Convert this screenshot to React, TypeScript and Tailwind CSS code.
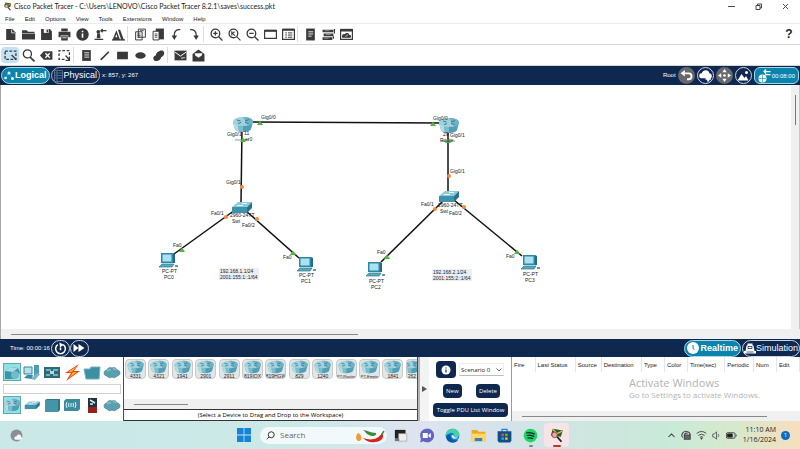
import React from "react";
import clsx from "clsx";

type Kids = { children?: React.ReactNode };

const Glyph = ({ children, size = 13 }: Kids & { size?: number }) => (
  <svg viewBox="0 0 24 24" width={size} height={size} fill="none" stroke="#3a3a3a" strokeWidth="2.4" aria-hidden="true">
    {children}
  </svg>
);

const D = "#3a3a3a";

const topGroups: { name: string; art: React.ReactNode }[][] = [
  [
    { name: "New", art: <><path d="M4 2h11l6 6v14H4z" fill={D} stroke="none" /><path d="M14 3v6h6" stroke="#fff" strokeWidth="1.4" /></> },
    { name: "Open", art: <path d="M0 4h9l2 3h12v2H0zM0 10h24v11H0z" fill={D} stroke="none" /> },
    { name: "Save", art: <><path d="M2 2h16l4 4v16H2z" fill={D} stroke="none" /><path d="M7 2h9v7H7z" fill="#fff" stroke="none" /><path d="M12 3h3v5h-3z" fill={D} stroke="none" /></> },
    { name: "Print", art: <><path d="M6 1h12v5H6zM1 7h22v10h-4v-3H5v3H1zM6 15h12v8H6z" fill={D} stroke="none" /><path d="M8 18h8" stroke="#fff" strokeWidth="1.5" /></> },
    { name: "Info", art: <><circle cx="12" cy="12" r="11.5" fill={D} stroke="none" /><path d="M12 10v8M12 5v3" stroke="#fff" strokeWidth="3" /></> },
    { name: "Activity", art: <><circle cx="8" cy="7" r="3.500" fill={D} stroke="none" /><path d="M6 10h5l1 9H5z" fill={D} stroke="none" /><path d="M1 21h16M12 5h11M16 2l-3 3 3 3" /></> },
    { name: "Draw", art: <><path d="M1 22 8 4l7 18zM11 3h4l7 19h-5z" fill={D} stroke="none" /><path d="m6 17 2-6 2 6z" fill="#fff" stroke="none" /><path d="M0 22h24" /></> },
  ],
  [
    { name: "Copy", art: <><path d="M8 2h13v15H8zM3 7h12v15H3z" fill="#fff" strokeWidth="1.8" /><path d="M6 11h6M6 14h6M6 17h6M11 5h7" strokeWidth="1.6" /></> },
    { name: "Paste", art: <><path d="M7 1h15v20H7z" fill={D} stroke="none" /><path d="M2 6h11v16H2z" fill="#fff" strokeWidth="1.8" /><path d="M5 11h5M5 14h5M5 17h5" strokeWidth="1.6" /></> },
    { name: "Undo", art: <><path d="M19 3c-7-1-11 3-11 9v4" /><path d="M3 14h10l-5 8z" fill={D} stroke="none" /></> },
    { name: "Redo", art: <><path d="M4 3c7-1 11 3 11 9v4" /><path d="M10 14h10l-5 8z" fill={D} stroke="none" /></> },
  ],
  [
    { name: "Zoom in", art: <><circle cx="10" cy="10" r="8" /><path d="m16 16 7 7M6 10h8M10 6v8" /></> },
    { name: "Zoom reset", art: <><circle cx="10" cy="10" r="8" /><path d="m16 16 7 7M7 6v8M7 11l5-4M8 10l5 4" strokeWidth="2" /></> },
    { name: "Zoom out", art: <><circle cx="10" cy="10" r="8" /><path d="m16 16 7 7M6 10h8" /></> },
    { name: "Viewport", art: <><path d="M1 5h22v14H1z" /><path d="M1 5h22" strokeWidth="4" /></> },
    { name: "List", art: <><path d="M1 3h22v18H1z" /><path d="M1 3h22" strokeWidth="4" /><path d="M6 9h3M6 13h3M6 17h3M11 9h8M11 13h8M11 17h8" strokeWidth="1.8" /></> },
  ],
  [
    { name: "Notes", art: <><path d="M4 1h16v22H4z" fill={D} stroke="none" /><path d="M8 7h9M8 11h9M8 15h6" stroke="#fff" strokeWidth="1.6" /></> },
    { name: "Devices", art: <><path d="M1 3h20v5H1zM3 10h18v5H3zM1 17h18v5H1z" fill={D} stroke="none" /><path d="M23 2v8M21 15v5" /><path d="M5 5h9M7 12h9M4 19h8" stroke="#ccc" strokeWidth="1" /></> },
    { name: "Cluster", art: <><path d="M1 3h22v18H1z" /><path d="M1 4h22" strokeWidth="5" /><path d="M5 17c-1-5 3-5 4-4 2-4 7-3 7 0 4 0 4 4 2 4z" fill={D} /><path d="m10 16 5-4" stroke="#fff" strokeWidth="1.3" /></> },
  ],
];

const drawGroups: { name: string; art: React.ReactNode; on?: boolean }[][] = [
  [
    { name: "Select", on: true, art: <><path d="M2 4h20v15H2z" strokeDasharray="5 3" /><path d="m14 11 8 8" /></> },
    { name: "Inspect", art: <><circle cx="10" cy="9" r="7.5" /><path d="m15 15 8 8" strokeWidth="3" /></> },
    { name: "Delete", art: <><path d="m0 12 7-8h16v16H7z" fill={D} stroke="none" /><path d="m10 8 8 8m0-8-8 8" stroke="#fff" strokeWidth="2.4" /></> },
    { name: "Resize", art: <><path d="M21 11V3H2v16h10" strokeDasharray="5 3" /><path d="M14 12l7 8m0-6v7h-7" /></> },
  ],
  [
    { name: "Place note", art: <><path d="M4 2h16v20H4z" fill={D} stroke="none" /><path d="M8 7h9M8 11h9M8 15h9" stroke="#fff" strokeWidth="1.6" /></> },
    { name: "Line", art: <path d="M5 20 20 5" strokeWidth="3" /> },
    { name: "Rectangle", art: <path d="M2 5h20v14H2z" fill={D} stroke="none" /> },
    { name: "Ellipse", art: <ellipse cx="12" cy="12" rx="9.5" ry="6" fill={D} stroke="none" /> },
    { name: "Freeform", art: <path d="M4 21c-4-4 0-9 3-9 0-6 8-11 13-9 5 3 2 10-3 12-1 6-8 9-13 6z" fill={D} stroke="none" /> },
  ],
  [
    { name: "Simple PDU", art: <><path d="M1 3h22v18H1z" fill={D} stroke="none" /><path d="m2 6 10 7 10-7" stroke="#fff" strokeWidth="1.8" /><path d="m13 17 7-1" stroke="#fff" strokeWidth="1.5" /></> },
    { name: "Complex PDU", art: <><path d="M1 9 12 1l11 8v14H1z" fill={D} stroke="none" /><path d="M5 8h14l-1 4-6 4-6-4z" fill="#fff" stroke="none" /></> },
  ],
];

function ToolRow({ groups, children }: Kids & { groups: { name: string; art: React.ReactNode; on?: boolean }[][] }) {
  return (
    <div role="toolbar" className="flex items-center border-b border-[#d6d6d6] py-[2px] pl-px">
      {groups.map((g, i) => (
        <div key={i} className="flex items-center">
          {i > 0 && <span className="mr-[3px] h-4 w-px bg-[#dcdcdc]" />}
          {g.map((t) => (
            <button key={t.name} aria-label={t.name} className={clsx("flex h-4 w-[18px] items-center justify-center rounded-sm", t.on && "bg-[#c4e2f6]")}>
              <Glyph>{t.art}</Glyph>
            </button>
          ))}
        </div>
      ))}
      {children}
    </div>
  );
}

const RouterArt = () => (
  <>
    <path d="M1 6 3 13c1 4 15 4 16 0l2-7z" fill="#4f9fb6" />
    <path d="M1 6l2 7c1 2 3 2.500 4 2.800L6 8z" fill="#b5dbe3" />
    <path d="M6 8l1 7.800 4 .3V9z" fill="#7dbccb" />
    <ellipse cx="11" cy="5.500" rx="10" ry="4.500" fill="#9fd0dc" />
    <path d="M11 1c7 0 10 2 10 4.500S19 9 16 9.500z" fill="#6db3c6" />
    <path d="m5 4 3.500 1M13 5l4-1.500M6 7.500 9 6.500M13 6.500l3.500 1" stroke="#337f97" strokeWidth="1" />
  </>
);
const SwitchArt = () => (
  <>
    <path d="m1 7 6-5h14l-5 5z" fill="#8ccbdc" />
    <path d="M1 7h15v6H1z" fill="#3e92ab" />
    <path d="m16 7 5-5v6l-5 5z" fill="#2a7189" />
    <path d="m6 5.500 6 0m-1-2 5 0" stroke="#e9fbff" />
  </>
);
const PcArt = () => (
  <>
    <path d="M3 1h12v10H3z" fill="#2f87a3" />
    <path d="M4.500 2.500h9v7h-9z" fill="#a9e3f2" />
    <path d="m15 1 2 1v9l-2 0z" fill="#256b84" />
    <path d="M1 15l3-3h12l-2 3z" fill="#58a9c0" stroke="#2c7990" strokeWidth=".7" />
    <path d="M17 14h3" stroke="#2c7990" strokeWidth="1.500" />
  </>
);

const links = [
  [253, 37, 440, 38], [242, 43, 241, 118], [235, 125, 174, 169], [246, 126, 299, 173],
  [448, 45, 448, 107], [444, 115, 381, 177], [454, 115, 522, 171],
];
const ups = [[260, 38], [433, 39], [243, 55], [448, 56], [182, 165], [293, 168], [387, 172], [517, 167]];
const waits = [[242, 102], [449, 91], [226, 132], [257, 134], [435, 124], [464, 122]];

const labels: [number, number, string][] = [
  [261, 32, "Gig0/0"], [227, 49, "Gig0/1"], [244, 48, "11"], [245, 54, "er0"], [226, 97, "Gig0/1"],
  [211, 128, "Fa0/1"], [230, 130, "2960-24TT"], [232, 136, "Swi"], [242, 140, "Fa0/2"],
  [173, 160, "Fa0"], [283, 172, "Fa0"], [162, 186, "PC-PT"], [164, 192, "PC0"], [299, 190, "PC-PT"], [301, 196, "PC1"],
  [433, 33, "Gig0/0"], [443, 49, "29"], [440, 55, "Route"], [450, 50, "Gig0/1"], [450, 86, "Gig0/1"],
  [421, 119, "Fa0/1"], [438, 120, "2960-24TT"], [440, 126, "Swi"], [449, 128, "Fa0/2"],
  [377, 167, "Fa0"], [506, 171, "Fa0"], [369, 196, "PC-PT"], [371, 202, "PC2"], [523, 189, "PC-PT"], [525, 195, "PC3"],
];
const notes: [number, number, string, string][] = [
  [219, 183, "192.168.1.1/24", "2001:155:1::1/64"],
  [432, 184, "192.168.2.1/24", "2001:155:2::1/64"],
];

function Workspace() {
  return (
    <main className="flex min-h-0 flex-1 flex-col border-l border-[#a8a8a8] bg-[#f0f0f0]">
      <div className="flex min-h-0 flex-1">
        <div className="relative -ml-px flex-1 overflow-hidden bg-white bg-clip-content pl-px text-[5px] leading-[6px] text-[#222]">
          <svg className="absolute top-0 left-0" width="600" height="240" fill="none" aria-label="Network topology">
            {links.map(([a, b, c, d], i) => <path key={i} d={`M${a} ${b}L${c} ${d}`} stroke="#111" strokeWidth="1.500" />)}
            <path d="M235 55h14M441 56h14" stroke="#4b7b4b" strokeWidth=".7" />
            <g transform="translate(232 31)"><RouterArt /></g>
            <g transform="translate(438 32)"><RouterArt /></g>
            <g transform="translate(231 115)"><SwitchArt /></g>
            <g transform="translate(438 104)"><SwitchArt /></g>
            <g transform="translate(158 167)"><PcArt /></g>
            <g transform="translate(296 171)"><PcArt /></g>
            <g transform="translate(365 176)"><PcArt /></g>
            <g transform="translate(520 169)"><PcArt /></g>
            {ups.map(([x, y], i) => <path key={i} d={`M${x} ${y - 2.5}l3 4.500h-6z`} fill="#4fb83c" />)}
            {waits.map(([x, y], i) => <circle key={i} cx={x} cy={y} r="2" fill="#f58a3c" />)}
          </svg>
          {notes.map(([x, y, a, b]) => (
            <div key={x} className="absolute bg-[#eceef6] px-px" style={{ left: x, top: y }}>
              {a}<br />{b}
            </div>
          ))}
          {labels.map(([x, y, t], i) => (
            <span key={i} className="absolute -translate-y-1/2 whitespace-nowrap" style={{ left: x, top: y }}>{t}</span>
          ))}
        </div>
        <div className="flex w-[9px] justify-center border-r border-[#c8c8c8] pt-[10px]">
          <span className="h-[30px] w-px bg-[#777]" />
        </div>
      </div>
      <div className="flex h-[10px] items-center pl-[10px]"><span className="h-px w-[44%] bg-[#888]" /></div>
    </main>
  );
}

const roundBtn = "flex h-[17px] w-[17px] items-center justify-center rounded-full";
const pill = "flex h-[17px] items-center border leading-none text-white";

function NavBar() {
  return (
    <nav className="flex shrink-0 items-center bg-[#0e2850] py-px text-[6px] text-white">
      <button className={clsx(pill, "ml-px gap-px rounded-full border-[#a8d8e8] bg-[#0b84ad] px-[2px] text-[9px] font-bold")}>
        <svg width="10" height="12" viewBox="0 0 10 12" fill="#fff" aria-hidden="true"><circle cx="1.500" cy="8" r="1.300" /><circle cx="5" cy="3" r="1.500" /><circle cx="8.500" cy="8.500" r="1.500" /><path d="m1.500 8 3.500-5 3.500 5.500" stroke="#fff" strokeWidth=".4" strokeDasharray="1 1" fill="none" /></svg>
        Logical
      </button>
      <button className={clsx(pill, "ml-px gap-px rounded-full border-[#a9b5c8] px-[2px] text-[9px]")}>
        <svg width="9" height="12" viewBox="0 0 9 12" fill="none" stroke="#53698c" aria-hidden="true"><path d="M.5.500h8v11h-8zM1 3h7M1 5.500h7M1 8h7M3 1v10" /></svg>
        Physical
      </button>
      <span className="ml-[2px]">x: 857, y: 267</span>
      <span className="mr-[2px] ml-auto">Root</span>
      <div className="flex gap-[2px]">
        <button aria-label="Back" className={clsx(roundBtn, "bg-[#66686b]")}>
          <svg width="13" height="13" viewBox="0 0 24 24" fill="none" stroke="#fff" strokeWidth="3.500"><path d="M5 8h11c7 0 7 11 0 11h-3" /><path d="M9 2v12L1 8z" fill="#fff" stroke="none" /></svg>
        </button>
        <button aria-label="New cluster" className={clsx(roundBtn, "border border-[#cbd4e2]")}>
          <svg width="13" height="13" viewBox="0 0 24 24" fill="#fff"><path d="M4 17c-6-2-4-10 1-9 2-8 14-7 14 0 5 0 6 7 3 9z" /><path d="M17 13v10m-5-5h10" stroke="#fff" strokeWidth="4" /></svg>
        </button>
        <button aria-label="Move object" className={clsx(roundBtn, "bg-[#66686b]")}>
          <svg width="13" height="13" viewBox="0 0 24 24" fill="#fff"><path d="m12 0 4 6H8zM12 24l4-6H8zM0 12l6-4v8zM24 12l-6-4v8z" /><circle cx="12" cy="12" r="2.500" /></svg>
        </button>
        <button aria-label="Background" className={clsx(roundBtn, "border border-[#cbd4e2]")}>
          <svg width="12" height="12" viewBox="0 0 24 24" fill="#fff"><path d="m1 21 8-13 6 8 3-4 5 9z" /><circle cx="19" cy="5" r="3" /></svg>
        </button>
        <button className={clsx(pill, "mr-px gap-px rounded-md border-[#a8d8e8] bg-[#0b84ad] px-[3px] text-[6px]")}>
          <svg width="13" height="14" viewBox="0 0 26 28" fill="none" stroke="#fff" strokeWidth="2.500" aria-hidden="true"><circle cx="9" cy="19" r="8" fill="#fff" stroke="none" /><path d="M2 19h14M9 12v14" stroke="#0b84ad" strokeWidth="1.200" /><path d="M12 5h13M16 1l-4 4 4 4M14 11h11" /></svg>
          00:08:00
        </button>
      </div>
    </nav>
  );
}

function TimeBar() {
  return (
    <div className="flex h-[18px] shrink-0 items-center bg-[#0e2850] pl-[10px] text-[6px] text-white">
      <span>Time: 00:00:16</span>
      <button aria-label="Power cycle devices" className="ml-px flex h-[17px] w-[19px] items-center justify-center rounded-full border border-[#cbd4e2]">
        <svg width="13" height="13" viewBox="0 0 24 24" fill="none" stroke="#fff" strokeWidth="2.800"><path d="M7 5a9 9 0 1 0 10 0M12 10v5" /><path d="m10 1 8 4-7 5z" fill="#fff" stroke="none" /></svg>
      </button>
      <button aria-label="Fast forward" className="flex h-[17px] w-[19px] items-center justify-center rounded-full border border-[#cbd4e2]">
        <svg width="12" height="12" viewBox="0 0 24 24" fill="#fff"><path d="m1 4 10 8-10 8zM11 4l12 8-12 8z" /></svg>
      </button>
      <button className={clsx(pill, "mr-px ml-auto gap-px rounded-full border-[#a8d8e8] bg-[#0b84ad] px-[2px] text-[9px] font-bold")}>
        <svg width="12" height="12" viewBox="0 0 12 12" aria-hidden="true"><circle cx="6" cy="6" r="6" fill="#fff" /><path d="M6 3v3.500l1.500 1" stroke="#0b84ad" fill="none" /></svg>
        Realtime
      </button>
      <button className={clsx(pill, "rounded-full border-[#cbd4e2] px-px text-[9px]")}>
        <svg width="12" height="13" viewBox="0 0 24 24" fill="#fff" aria-hidden="true"><path d="M7 2h10v4H7zM5 6h14l2 11H3zM0 17h24v5H0z" /><path d="M8 8h8v4H8zM5 19h14" stroke="#0e2850" strokeWidth="1.500" fill="#fff" /></svg>
        Simulation
      </button>
    </div>
  );
}

const MiniRouter = () => <svg width="19" height="14" viewBox="0 0 22 17" fill="none" className="shrink-0" aria-hidden="true"><RouterArt /></svg>;
const Cloud = () => (
  <>
    <path d="M4 13c-4 0-4-6 0-6 1-3 4-3 5-2 1-1 4-1 5 2 4 0 4 6 0 6-1 2-4 2-5 1-1 1-4 1-5-1z" fill="#5b9fae" stroke="#3f7f90" strokeWidth=".6" />
    <path d="M4 8q2-2 4-1m2-1q2-1 3 1" stroke="#9fd0da" />
  </>
);

const kinds: { name: string; art: React.ReactNode; on?: boolean }[] = [
  { name: "Network Devices", on: true, art: <><path d="M2 8l5-4 8 1 2 5-6 6H2z" fill="#3f94a8" /><path d="m2 8 5-4 8 1-5 4z" fill="#a8dde4" /><circle cx="12" cy="12" r="4" fill="#73bac8" /></> },
  { name: "End Devices", art: <><path d="M1 4h8v7H1z" fill="#b4e2ec" stroke="#32859b" /><path d="M1 15l3-3h6l-1 4z" fill="#3c8ca0" /><path d="m11 2 5 0v10l-5 5z" fill="#4b9fb4" /><path d="m8 16 6-6 3 1-5 6z" fill="#76b9c7" /></> },
  { name: "Components", art: <><path d="M1 4h16v11H1z" fill="#2f6978" /><path d="M3 7h5m2 0h5M3 12h4m3 0h5" stroke="#8fc9d2" strokeWidth="1.500" /><path d="M7 8h4v3H7z" fill="#b0dbe0" /></> },
  { name: "Connections", art: <><path d="M16 1 2 10l6 0-5 8L17 8h-6z" fill="#e8411c" /><path d="M14 3 5 9l5 0-4 6 8-6H9z" fill="#fbb02c" /></> },
  { name: "Miscellaneous", art: <path d="M1 6h6l1-2h9l-1 12H3z" fill="#3f8fa3" stroke="#68b5c4" /> },
  { name: "Multiuser", art: <Cloud /> },
  { name: "Routers", on: true, art: <g transform="translate(0 2) scale(.82)"><RouterArt /></g> },
  { name: "Switches", art: <g transform="translate(1 4) scale(.75 .7)"><SwitchArt /></g> },
  { name: "Hubs", art: <><path d="m2 4 2-1h13v11l-2 2H2z" fill="#2e7688" /><path d="M2 4h13v12H2z" fill="#4595a8" /></> },
  { name: "Wireless", art: <><path d="M1 5l2-2h14v10l-2 2H1z" fill="#3c8ca0" /><path d="M4 6q-2 3 0 6m2-5q-1 2 0 4m6-5q2 3 0 6m-2-5q1 2 0 4M8 7v4" stroke="#d8f5f8" /></> },
  { name: "Security", art: <><path d="M5 2h9v9H5z" fill="#1f3442" /><path d="m7 4 5 3M7 8h3" stroke="#d9eef2" strokeWidth="1.500" /><path d="M5 11h9v6H5z" fill="#96201c" /></> },
  { name: "WAN Emulation", art: <Cloud /> },
];

const Kind = ({ k }: { k: (typeof kinds)[number] }) => (
  <button aria-label={k.name} className={clsx("flex h-[18px] w-[18px] items-center justify-center", k.on && "bg-[#8fe3e6] outline-1 -outline-offset-1 outline-[#5fa9b0]")}>
    <svg width="18" height="18" viewBox="0 0 18 18" fill="none">{k.art}</svg>
  </button>
);

const models = ["4331", "4321", "1941", "2901", "2911", "819IOX", "819HGW", "829", "1240", "PT-Router", "PT-Empty", "1841", "262"];
const columns = [
  ["Fire", "w-[8%]"], ["Last Status", "w-[14%]"], ["Source", "w-[9%]"], ["Destination", "w-[14%]"], ["Type", "w-[8%]"],
  ["Color", "w-[8%]"], ["Time(sec)", "w-[13%]"], ["Periodic", "w-[10%]"], ["Num", "w-[8%]"], ["Edit", "w-[8%]"],
];
const navy = "rounded-sm bg-[#0e2850] text-white";

function BottomPanel() {
  return (
    <section className="grid h-16 shrink-0 grid-cols-[123px_minmax(0,295fr)_11px_82px_minmax(0,289fr)] bg-white text-[6px] leading-[8px]">
      <div className="flex flex-col justify-between bg-white pt-[6px] pr-[2px] pb-[7px] pl-[3px]">
        <div className="flex gap-[2px]">{kinds.slice(0, 6).map((k) => <Kind key={k.name} k={k} />)}</div>
        <input aria-label="Search devices" className="h-[10px] w-full border border-[#d2d2d2] px-1 outline-none" />
        <div className="flex gap-[2px]">{kinds.slice(6).map((k) => <Kind key={k.name} k={k} />)}</div>
      </div>
      <div className="flex min-w-0 flex-col border-x border-[#55484a]">
        <div className="flex flex-1 items-start justify-between pt-[2px] pl-px">
          {models.map((m, i) => (
            <button
              key={m}
              className={clsx(
                "flex h-5 flex-col items-center overflow-hidden border border-[#c9c9c9] bg-[#e2e6e7] leading-[5px] whitespace-nowrap text-[#222]",
                i === 12 ? "w-[11px] rounded-l-sm border-r-0" : "w-[21px] rounded-sm",
                m.length > 6 ? "text-[4px]" : "text-[5px]",
              )}
            >
              <MiniRouter />
              {m}
            </button>
          ))}
        </div>
        <div className="flex h-[10px] items-center bg-[#f0f0f0] pl-[10px]"><span className="h-px w-[54px] bg-[#888]" /></div>
        <p className="h-3 border-y border-[#333] text-center font-['Open_Sans',sans-serif] text-[6px] leading-[10px] text-black">(Select a Device to Drag and Drop to the Workspace)</p>
      </div>
      <div className="flex items-center border-l-2 border-[#b5b5b5] bg-[#f3f3f3] pl-[2px]">
        <button aria-label="Collapse panel">
          <svg width="5" height="6" viewBox="0 0 5 6" fill="#555"><path d="M0 0l5 3-5 3z" /></svg>
        </button>
      </div>
      <div className="flex flex-col justify-between pt-1 pr-[3px] pb-1 pl-1 font-['Open_Sans',sans-serif]">
        <div className="flex items-center justify-between pr-1 pl-[3px]">
          <button aria-label="Scenario info" className={clsx(navy, "flex h-[17px] w-5 items-center justify-center rounded-md")}>
            <svg width="10" height="10" viewBox="0 0 10 10" aria-hidden="true"><circle cx="5" cy="5" r="4.500" fill="#fff" /><path d="M5 4.500v3M5 2.500v1" stroke="#0e2850" strokeWidth="1.200" /></svg>
          </button>
          <div className="flex items-center border border-[#eee] border-b-[#bbb]">
            <select aria-label="Scenario" className="h-[11px] w-9 appearance-none bg-transparent pl-px outline-none"><option>Scenario 0</option></select>
            <svg width="6" height="4" viewBox="0 0 6 4" fill="none" stroke="#666" className="mr-px"><path d="m.5.500 2.500 2.500L5.500.500" /></svg>
          </div>
        </div>
        <div className="flex justify-between pr-2 pl-[10px]">
          <button className={clsx(navy, "h-[14px] px-[3px]")}>New</button>
          <button className={clsx(navy, "h-[14px] px-[3px]")}>Delete</button>
        </div>
        <button className={clsx(navy, "h-[14px] w-full whitespace-nowrap")}>Toggle PDU List Window</button>
      </div>
      <div className="flex min-w-0 flex-col border-l border-[#999]">
        <table className="w-full table-fixed text-left">
          <thead>
            <tr>
              {columns.map(([c, w]) => <th key={c} className={clsx(w, "h-[15px] border-r border-[#e6e6e6] pl-[2px] font-normal whitespace-nowrap")}>{c}</th>)}
            </tr>
          </thead>
        </table>
        <div className="flex-1 self-end pt-1 pr-10 font-['Open_Sans',sans-serif] text-[#b3b3b3]">
          <p className="text-[11px] leading-[13px]">Activate Windows</p>
          <p className="text-[8px] leading-[12px]">Go to Settings to activate Windows.</p>
        </div>
        <div className="flex h-[10px] items-center bg-[#f0f0f0] pl-[10px]"><span className="h-px w-[88%] bg-[#888]" /></div>
      </div>
    </section>
  );
}

const apps: { name: string; art: React.ReactNode }[] = [
  { name: "Task view", art: <><path d="M3 3h17v14H3z" fill="#222" /><path d="M9 9h13v12H9z" fill="#eee" stroke="#999" /><path d="M3 17h7v4H3z" fill="#777" /></> },
  { name: "Chat", art: <><path d="M12 1a11 11 0 1 1-5 20l-5 2 1-6A11 11 0 0 1 12 1z" fill="#6264c7" /><path d="M6 8h8v8H6zM15 11l4-3v8l-4-3z" fill="#fff" /></> },
  { name: "Edge", art: <><circle cx="12" cy="12" r="11" fill="#1680cf" /><path d="M1 11C3-2 22-2 23 10c0 6-8 6-9 3 2-4-4-7-8-4-3 1-4 2-5 2z" fill="#48cfae" /><path d="M9 11c-2 6 4 11 12 8-6 8-18 4-19-4 1-4 5-6 7-4z" fill="#0b59a5" /><path d="M11 11c-2 4 3 8 10 5l-2-1c-4 1-5-1-5-3z" fill="#e4f5fb" /></> },
  { name: "Files", art: <><path d="M1 3h9l2 3h11v15H1z" fill="#f1a91f" /><path d="M1 9h22v12H1z" fill="#ffd766" /><path d="M6 16h12v5H6z" fill="#2e83c8" /></> },
  { name: "Store", art: <><path d="M8 6V2h8v4" fill="none" stroke="#2487ce" strokeWidth="2" /><path d="M1 5h22v15l-2 3H3l-2-3z" fill="#124d8b" /><path d="M7 9h4v4H7z" fill="#f25022" /><path d="M13 9h4v4h-4z" fill="#7fba00" /><path d="M7 15h4v4H7z" fill="#22a7ef" /><path d="M13 15h4v4h-4z" fill="#ffb900" /></> },
  { name: "Spotify", art: <><circle cx="12" cy="12" r="11" fill="#1ed760" /><path d="M5 8q8-2 14 2M6 12q7-2 12 2M7 16q5-1 9 1" stroke="#123" strokeWidth="2" fill="none" /></> },
  { name: "Packet Tracer", art: <><path d="M6 1 22 4l-3 10L3 12z" fill="#2c5b25" /><path d="m6 2 7 7 8-4" stroke="#e3c24c" strokeWidth="2" fill="none" /><circle cx="9" cy="11" r="4.500" fill="#e7a7a0" stroke="#5a2a22" /><path d="m13 14 7 8" stroke="#222" strokeWidth="3" /></> },
];

function Taskbar() {
  return (
    <footer className="relative flex h-7 shrink-0 items-center justify-between bg-linear-[90deg,#c9e8e7_0%,#cce9e7_38%,#dde4f0_52%,#d3e3e6_66%,#c8ead8_84%,#d8e8cc_92%,#f6dfbf_100%] px-[10px] font-['Open_Sans',sans-serif]">
      <button aria-label="Weather">
        <svg width="13" height="13" viewBox="0 0 24 24"><circle cx="12" cy="12" r="11" fill="#8c8f99" /><path d="M10 20c-4-3-1-7 2-6 2-6 9-4 9 1 3 2 1 5-1 5z" fill="#f3f6fa" /></svg>
      </button>
      <div className="absolute left-1/2 flex -translate-x-1/2 items-center gap-px pl-[6px]">
        <button aria-label="Start" className="mr-2">
          <svg width="14" height="14" viewBox="0 0 14 14" fill="#1583d8"><path d="M0 0h6.600v6.600H0zM7.400 0H14v6.600H7.400zM0 7.400h6.600V14H0zM7.400 7.400H14V14H7.400z" /></svg>
        </button>
        <label className="flex h-[17px] w-[127px] items-center rounded-full bg-[#f2f9fa] pr-[2px] pl-[6px]">
          <svg width="9" height="9" viewBox="0 0 12 12" fill="none" stroke="#333" strokeWidth="1.300" aria-hidden="true"><circle cx="7" cy="5" r="4" /><path d="m4 8-3 3" /></svg>
          <input aria-label="Search" placeholder="Search" className="ml-[5px] min-w-0 flex-1 bg-transparent text-[8px] outline-none placeholder:text-[#666]" />
          <svg width="29" height="15" viewBox="0 0 29 15" fill="none" aria-hidden="true"><path d="M2 5c4 1 5 9 0 8-3-2-2-6 0-8z" fill="#ef9d32" /><path d="M7 2c4 0 7 3 13 3 1 3-4 4-7 2-3-1-4-4-6-5z" fill="#3f8a35" /><path d="M7 10c6 2 14 3 19-5 3 3 0 9-7 9-5 1-9-1-12-4z" fill="#d3261f" /><path d="M26 6l2-3" stroke="#3f8a35" strokeWidth="1.500" /></svg>
        </label>
        {apps.map((a, i) => (
          <button key={a.name} aria-label={a.name} className={clsx("relative flex h-6 w-[25px] items-center justify-center rounded-sm", i === 6 && "bg-[#f6e4e6]")}>
            <svg width="15" height="15" viewBox="0 0 24 24">{a.art}</svg>
            {i > 4 && <span className={clsx("absolute bottom-0 h-[2px] rounded-full", i === 6 ? "w-2 bg-[#c8302c]" : "w-1 bg-[#7b8583]")} />}
          </button>
        ))}
      </div>
      <div className="flex items-center gap-[5px] text-[7px] leading-[10px] text-[#222]">
        <svg width="9" height="9" viewBox="0 0 12 12" fill="none" stroke="#333" strokeWidth="1.400"><path d="m2 8 4-4 4 4" /></svg>
        <svg width="10" height="10" viewBox="0 0 12 12" fill="none" stroke="#444" strokeWidth="1.300"><path d="M2 9C-1 5 4 0 8 2c3 1 3 3 3 4" /><path d="M4 6h7v5H4z" fill="#666" /><path d="M4 6q1-3 4-2" /></svg>
        <svg width="11" height="10" viewBox="0 0 14 12" fill="none" stroke="#444" strokeWidth="1.200"><path d="M1 4q6-5 12 0M3 6.500q4-3 8 0M5 9q2-2 4 0" /><circle cx="7" cy="10.500" r=".8" fill="#444" /></svg>
        <svg width="9" height="9" viewBox="0 0 12 12" fill="none" stroke="#444"><path d="M1 4h2l3-3v10L3 8H1zM8 4q2 2 0 4" /></svg>
        <svg width="11" height="7" viewBox="0 0 14 8" fill="none" stroke="#222"><rect x=".5" y=".5" width="11" height="7" rx="1.500" /><path d="M2 2h6v4H2z" fill="#222" /><path d="M13 3v2" /></svg>
        <div className="ml-px text-right">11:10 AM<br />1/16/2024</div>
        <span className="flex h-[9px] w-[9px] items-center justify-center rounded-full bg-[#0a6fc2] text-[6px] leading-none text-white">1</span>
      </div>
    </footer>
  );
}

export default function App() {
  return (
    <div className="flex h-screen flex-col overflow-hidden bg-white font-['Liberation_Sans',Arial,sans-serif] text-[#222]">
      <header className="shrink-0">
        <div className="flex h-3 items-center pr-[11px] pl-[3px]">
          <svg width="9" height="9" viewBox="0 0 24 24" aria-hidden="true">{apps[6].art}</svg>
          <h1 className="ml-[2px] font-[Lato,sans-serif] text-[7px]">Cisco Packet Tracer - C:\Users\LENOVO\Cisco Packet Tracer 8.2.1\saves\success.pkt</h1>
          <div className="ml-auto flex gap-5">
            {["M0 3.500h7", "M1 2.500h4v4H1zM2.500 2.500v-1.500h4v4H5", "m1 1 5 5m0-5-5 5"].map((d, i) => (
              <button key={d} aria-label={["Minimize", "Restore", "Close"][i]}>
                <svg width="7" height="7" viewBox="0 0 7 7" fill="none" stroke="#333" strokeWidth=".9"><path d={d} /></svg>
              </button>
            ))}
          </div>
        </div>
        <nav className="flex h-3 items-center border-b border-[#ececec] pt-[2px] text-[6px] leading-[8px]">
          {["File", "Edit", "Options", "View", "Tools", "Extensions", "Window", "Help"].map((m) => <button key={m} className="px-[5px]">{m}</button>)}
        </nav>
        <ToolRow groups={topGroups}>
          <button aria-label="Help contents" className="mr-[5px] ml-auto w-3 text-[12px] leading-none font-bold">?</button>
        </ToolRow>
        <ToolRow groups={drawGroups} />
      </header>
      <NavBar />
      <Workspace />
      <TimeBar />
      <BottomPanel />
      <Taskbar />
    </div>
  );
}
